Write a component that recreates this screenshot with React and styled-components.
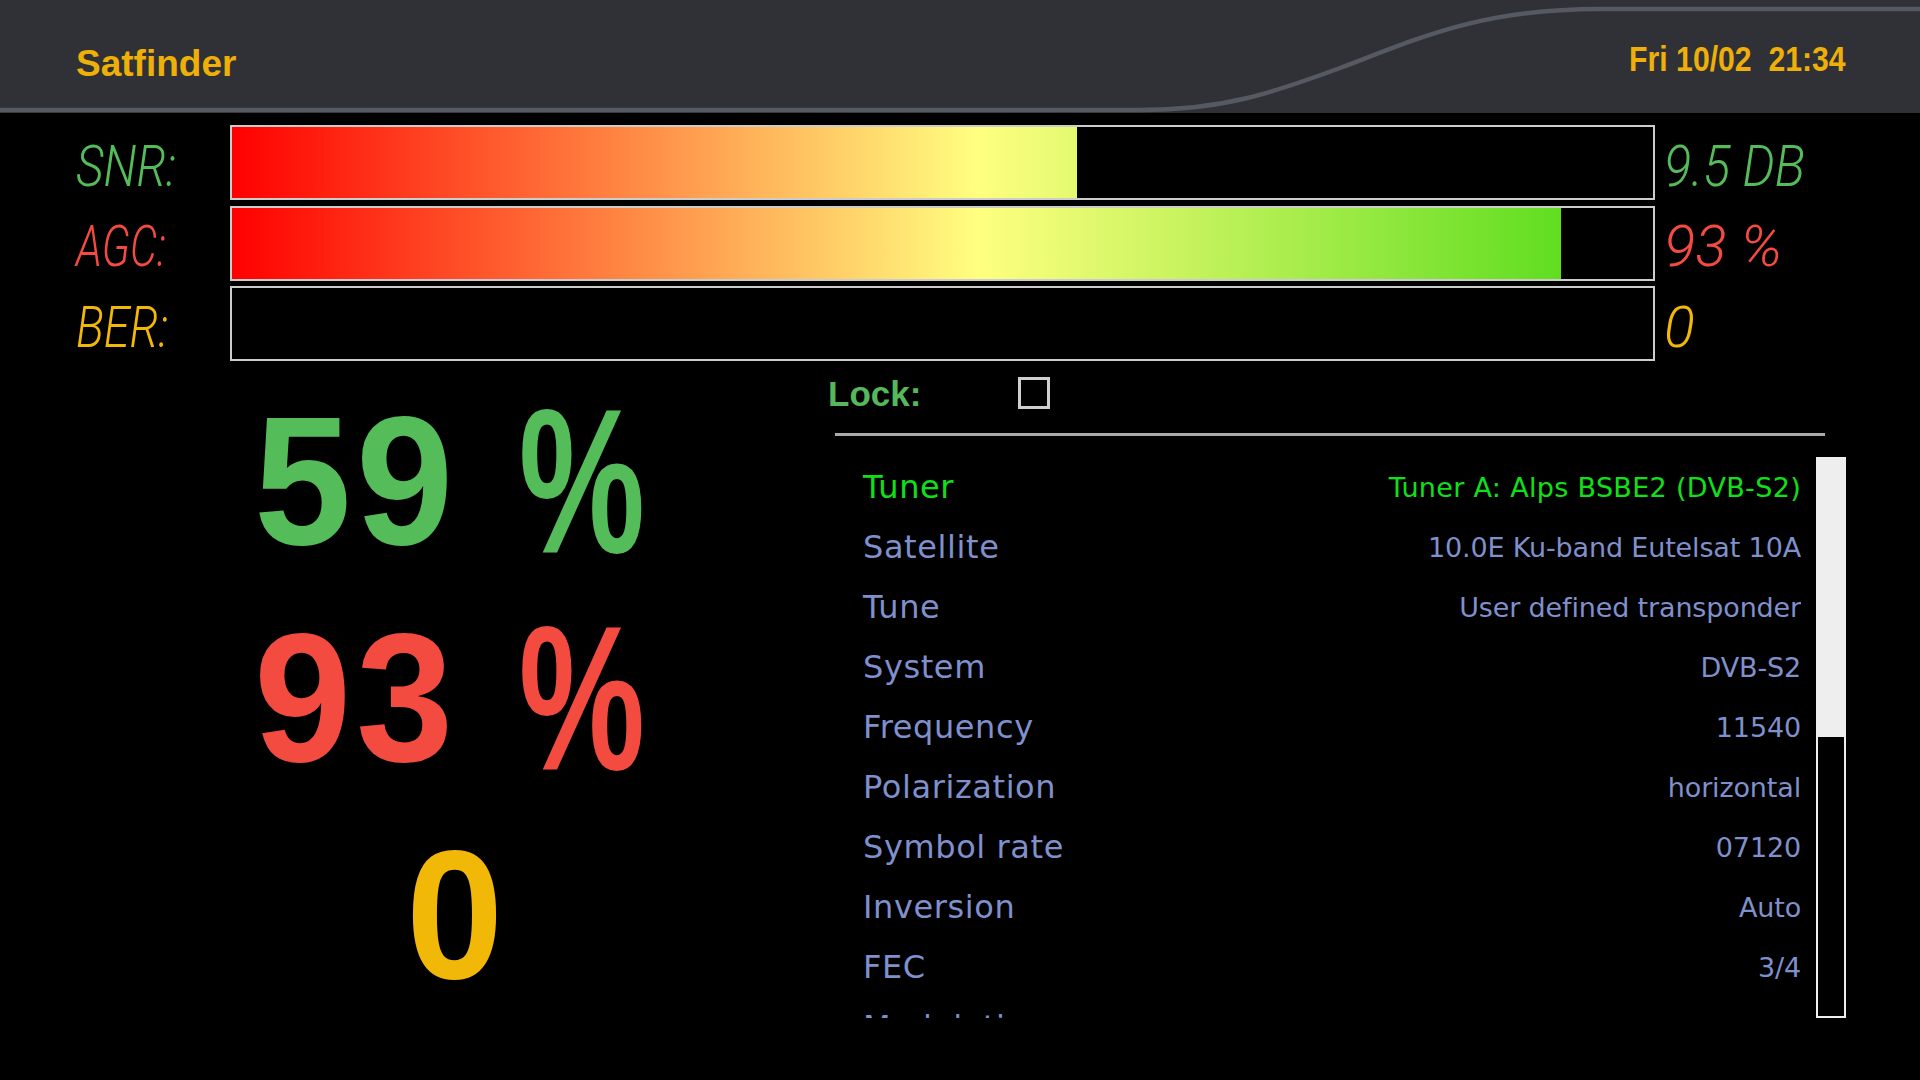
import React from "react";
import styled, { createGlobalStyle } from "styled-components";

const GREEN = "#54bd5a";
const RED = "#f34b3f";
const YELLOW = "#f2b807";

const meters = [
  { label: "SNR:", value: "9.5 DB", percent: 59.5, color: GREEN, labelSqueeze: 0.84, valueSqueeze: 0.89 },
  { label: "AGC:", value: "93 %", percent: 93.5, color: RED, labelSqueeze: 0.75, valueSqueeze: 1.02 },
  { label: "BER:", value: "0", percent: 0, color: YELLOW, labelSqueeze: 0.82, valueSqueeze: 1 },
];

const rows = [
  ["Tuner", "Tuner A: Alps BSBE2 (DVB-S2)"],
  ["Satellite", "10.0E Ku-band Eutelsat 10A"],
  ["Tune", "User defined transponder"],
  ["System", "DVB-S2"],
  ["Frequency", "11540"],
  ["Polarization", "horizontal"],
  ["Symbol rate", "07120"],
  ["Inversion", "Auto"],
  ["FEC", "3/4"],
  ["Modulation", ""],
];

export default function App() {
  return (
    <Screen>
      <GlobalStyle />
      <Header>
        <HeaderCurve viewBox="0 0 1920 113" preserveAspectRatio="none">
          <path
            d="M0 110 L1140 110 C1225 110 1275 92 1340 68 C1420 38 1480 9 1600 9 L1920 9"
            fill="none"
            stroke="#555962"
            strokeWidth="4.5"
          />
        </HeaderCurve>
        <Title>Satfinder</Title>
        <Clock>Fri 10/02&nbsp;&nbsp;21:34</Clock>
      </Header>

      <Meters>
        {meters.map((m) => (
          <MeterRow key={m.label}>
            <LcdText $color={m.color} $squeeze={m.labelSqueeze}>{m.label}</LcdText>
            <Track>
              {m.percent > 0 && (
                <Fill
                  style={{
                    width: m.percent + "%",
                    backgroundSize: (100 / m.percent) * 100 + "% 100%",
                  }}
                />
              )}
            </Track>
            <LcdValue $color={m.color} $squeeze={m.valueSqueeze}>{m.value}</LcdValue>
          </MeterRow>
        ))}
      </Meters>

      <Lower>
        <Gauges>
          <GaugeRow $color={GREEN}>
            <Digits>59</Digits>
            <Percent>%</Percent>
          </GaugeRow>
          <GaugeRow $color={RED}>
            <Digits>93</Digits>
            <Percent>%</Percent>
          </GaugeRow>
          <GaugeRow $color={YELLOW} $indent={152}>
            <Digits>0</Digits>
          </GaugeRow>
        </Gauges>

        <InfoPanel>
          <LockRow>
            <LockLabel>Lock:</LockLabel>
            <LockBox />
          </LockRow>
          <Separator />
          <ListArea>
            <List>
              {rows.map(([name, value], i) => (
                <Row key={name} $active={i === 0}>
                  <RowName>{name}</RowName>
                  <RowValue $active={i === 0}>{value}</RowValue>
                </Row>
              ))}
            </List>
            <Scrollbar>
              <ScrollThumb />
            </Scrollbar>
          </ListArea>
        </InfoPanel>
      </Lower>
    </Screen>
  );
}

const GlobalStyle = createGlobalStyle`
  html, body {
    margin: 0;
    background: #000;
    overflow: hidden;
  }
`;

const Screen = styled.div`
  width: 1920px;
  height: 1080px;
  background: #000;
  overflow: hidden;
  font-family: "Liberation Sans", Arial, sans-serif;
`;

// HEADER
const Header = styled.header`
  position: relative;
  height: 113px;
  box-sizing: border-box;
  background: #303136;
  display: flex;
  justify-content: space-between;
  align-items: flex-start;
  padding: 0 74px 0 76px;
  color: #eeb008;
  font-weight: bold;
`;

const HeaderCurve = styled.svg`
  position: absolute;
  left: 0;
  top: 0;
  width: 100%;
  height: 100%;
`;

const Title = styled.div`
  position: relative;
  font-size: 37px;
  line-height: 42px;
  margin-top: 43px;
`;

const Clock = styled.div`
  position: relative;
  font-size: 33px;
  line-height: 38px;
  margin-top: 40px;
  transform: scale(0.915, 1.08);
  transform-origin: right center;
`;

// METERS
const Meters = styled.section`
  display: flex;
  flex-direction: column;
  gap: 5.5px;
  padding-top: 12px;
`;

const MeterRow = styled.div`
  display: grid;
  grid-template-columns: 230px 1425px 1fr;
  height: 75px;
  align-items: center;
`;

const LcdText = styled.span`
  display: block;
  padding-left: 76px;
  margin-top: 8px;
  font-family: Roboto, "Liberation Sans", sans-serif;
  font-style: italic;
  font-weight: 300;
  font-size: 57px;
  line-height: 60px;
  white-space: pre;
  color: ${(props) => props.$color};
  transform: scaleX(${(props) => props.$squeeze});
  transform-origin: 76px 0;
`;

const LcdValue = styled(LcdText)`
  padding-left: 9px;
  transform-origin: 9px 0;
`;

const Track = styled.div`
  height: 75px;
  box-sizing: border-box;
  border: 2px solid #cccccc;
  background: #000;
`;

const Fill = styled.div`
  height: 100%;
  background-image: linear-gradient(
    to right,
    #ff0000 0%,
    #ffff80 52.5%,
    #47d811 100%
  );
  background-repeat: no-repeat;
`;

// LOWER AREA
const Lower = styled.section`
  display: grid;
  grid-template-columns: 828px 1018px;
`;

const Gauges = styled.div`
  display: flex;
  flex-direction: column;
  padding: 11px 0 0 254px;
`;

const GaugeRow = styled.div`
  display: flex;
  align-items: center;
  height: 217px;
  padding-left: ${(props) => props.$indent || 0}px;
  color: ${(props) => props.$color};
  font-weight: bold;
`;

const Digits = styled.span`
  display: inline-block;
  font-size: 184px;
  line-height: 217px;
  letter-spacing: 5px;
  transform: scaleX(0.95);
  transform-origin: left center;
`;

const Percent = styled.span`
  display: inline-block;
  margin-left: 50px;
  font-size: 142px;
  line-height: 217px;
  transform: scaleY(1.45);
`;

const InfoPanel = styled.div`
  display: flex;
  flex-direction: column;
`;

const LockRow = styled.div`
  display: flex;
  align-items: center;
  height: 32px;
  margin-top: 16px;
`;

const LockLabel = styled.span`
  width: 190px;
  padding-top: 2px;
  color: #55b85a;
  font-size: 35px;
  font-weight: bold;
`;

const LockBox = styled.div`
  width: 32px;
  height: 32px;
  box-sizing: border-box;
  border: 3px solid #cfcfcf;
`;

const Separator = styled.div`
  height: 3px;
  width: 990px;
  margin: 24px 0 21px 7px;
  background: #aaaaaa;
`;

const ListArea = styled.div`
  display: flex;
  height: 561px;
  padding-left: 7px;
`;

const List = styled.div`
  width: 966px;
  margin-right: 15px;
  overflow: hidden;
`;

const Row = styled.div`
  display: flex;
  justify-content: space-between;
  align-items: flex-start;
  height: 60px;
  padding-left: 28px;
  font-family: "DejaVu Sans", Verdana, sans-serif;
  color: ${(props) => (props.$active ? "#10e018" : "#7f90cc")};
`;

const RowName = styled.span`
  font-size: 32px;
  line-height: 60px;
  letter-spacing: 0.6px;
`;

const RowValue = styled.span`
  font-size: 27px;
  line-height: 61px;
  letter-spacing: ${(props) => (props.$active ? "0.32px" : "-0.15px")};
  font-weight: ${(props) => (props.$active ? 500 : 400)};
`;

const Scrollbar = styled.div`
  width: 30px;
  height: 561px;
  box-sizing: border-box;
  border: 2px solid #eeeeee;
`;

const ScrollThumb = styled.div`
  height: 278px;
  background: #eeeeee;
`;
